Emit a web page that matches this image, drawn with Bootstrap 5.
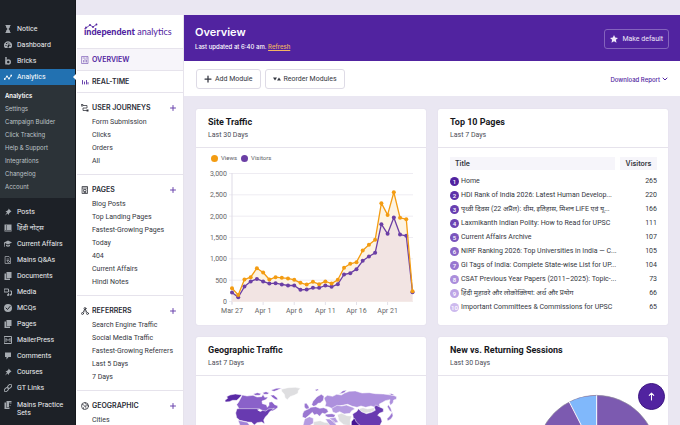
<!DOCTYPE html>
<html lang="en">
<head>
<meta charset="utf-8">
<meta name="viewport" content="width=device-width, initial-scale=1">
<title>Overview – Independent Analytics</title>
<link href="https://cdn.jsdelivr.net/npm/bootstrap@5.3.0/dist/css/bootstrap.min.css" rel="stylesheet">
<style>
:root{--purple:#5123a0;--ink:#333640;--line:#e6e3ec}
body{font-family:Roboto,"Noto Sans",sans-serif;font-size:7px;line-height:13px;color:var(--ink);background:#eae7f2}
a{color:inherit;text-decoration:none}
svg{display:block;flex:none}
.submenu,.top-link,.sec-head,.hero h1,.hero p,.dl,.pages th{font-family:Inter,"Noto Sans",sans-serif}
.ico{width:8px;height:8px;fill:none;stroke:currentColor;stroke-width:1.5;stroke-linecap:round;stroke-linejoin:round}
.ico .f{fill:currentColor;stroke:none}
.shell{height:100vh}
.admin{width:76px;background:#1d2127;color:#eceef0;padding-top:21px;border-right:1px solid #15181c}
.admin .item{display:flex;gap:5px;padding:2px 4px;line-height:12px;position:relative}
.admin .item .ico{width:8px;height:8px;margin-top:2px;color:#a5aab0}
.admin .two{line-height:8px;padding-top:5px}
.admin .two .ico{margin-top:0}
.admin .current{background:#2271b1;color:#fff}
.admin .current .ico{color:#fff}
.admin .current::after{content:"";position:absolute;right:-1px;top:5px;border:3px solid transparent;border-right-color:#fff;border-left:0}
.submenu{background:#2c3338;color:#bfc4c9;font-size:6px;padding:4px 5px 5px;margin-bottom:6px}
.submenu a{display:block}
.submenu .on{color:#fff;font-weight:600}
.reports{width:108px;background:#fff;margin-top:15px;border-right:1px solid var(--line);border-left:1px solid #fff}
.brandmark{height:34px;padding-left:7px;color:var(--purple);border-bottom:1px solid var(--line)}
.brandmark svg{overflow:visible}
.brandmark text{font-family:Lato,sans-serif;font-size:9px;fill:currentColor}
.top-link,.sec-head{display:flex;align-items:center;gap:3px;padding:0 7px 0 4px;font-weight:600;color:#2b2d36}
.top-link{height:22px;border-bottom:1px solid var(--line)}
.top-link.on{background:#f7f5fa;color:var(--purple)}
.top-link .ico{color:#6a45ad}
.sec{border-bottom:1px solid var(--line);padding:6px 0}
.sec-head{height:17px}
.plus{border:0;background:none;padding:0;margin-left:auto;color:#6a45ad}
.plus .ico{width:6px;height:6px}
.sec ul{padding-left:15px;margin:0}
.main{margin-top:15px}
.hero{background:var(--purple);color:#fff;padding:9px 11px 8px}
.hero h1{font-size:11px;line-height:16px;font-weight:600;margin:0}
.hero p{font-size:6px;line-height:13px;margin:0;font-weight:500}
.hero p a{color:#f3b562;text-decoration:underline}
.star{border:1px solid #8463bd;color:#eee8f8;border-radius:3px;font-size:7px;line-height:18px;padding:0 5px;background:none}
.tools{background:#fff;padding:8px 12px 7px}
.tool{font-size:7px;line-height:18px;padding:0 7px;gap:3px;border:1px solid #dedbe6;border-radius:3px;background:#fff;color:var(--ink)}
.dl{border:0;background:none;padding:0;gap:2px;color:var(--purple);font-size:6px;font-weight:500}
.dl .ico{width:6px;height:6px}
.board{display:grid;grid-template-columns:1fr 1fr;gap:12px;padding:13px 12px}
.panel{background:#fff;border:0;border-radius:2px;box-shadow:0 0 1px #cfc9dc}
.panel-head{padding:6px 12px 6px;border-bottom:1px solid var(--line)}
.panel-head h2{font-size:9px;line-height:14px;font-weight:700;color:#17181d;margin:0}
.panel-head p{font-size:7px;line-height:12px;margin:0;color:#4c4e57}
.legend-row{padding:4px 15px 3px;line-height:12px;font-size:6px;color:#5b5d66}
.dot{width:7px;height:7px;border-radius:50%;background:#f39c12;margin-right:3px}
.dot.v{background:#6b3fa5}
.chart text{font-size:7px;fill:#666}
.pages{width:calc(100% - 23px);margin:9px 11px 0 12px;table-layout:fixed;border-collapse:separate;border-spacing:0}
.pages th{background:#f6f5fa;line-height:13px;padding:0 5px;font-weight:600}
.pages th:last-child{width:42px;border-left:5px solid #fff;text-align:center}
.pages td{line-height:14px;padding:0}
.pages td:last-child{text-align:right}
.pages tr:first-child td{padding-top:4px}
.cellwrap{display:flex;align-items:center;gap:2px}
.rank{width:9px;height:9px;border-radius:50%;color:#fff;font-size:6px;line-height:9px;text-align:center;font-weight:500;flex:none}
.r1{background:#5123a0}.r2{background:#5d31a9}.r3{background:#683eb0}.r4{background:#6c44b3}.r5{background:#7a54bd}
.r6{background:#8966c7}.r7{background:#9877d0}.r8{background:#ab8edb}.r9{background:#bda5e6}.r10{background:#cdbaee}
.up{position:fixed;right:15px;bottom:15px;width:27px;height:27px;border-radius:50%;border:1px solid #3d1780;background:var(--purple);color:#fff;padding:0}
.up .ico{width:9px;height:9px}
</style>
</head>
<body>
<div class="shell d-flex overflow-hidden">
<nav class="admin flex-shrink-0" aria-label="Admin menu">
<a href="#" class="item"><svg class="ico" viewBox="0 0 16 16"><path class="f" d="M3 0h10v2h-1c0 3-1 4-3 6 2 2 3 3 3 6h1v2H3v-2h1c0-3 1-4 3-6-2-2-3-3-3-6H3z"/></svg>Notice</a>
<a href="#" class="item"><svg class="ico" viewBox="0 0 16 16"><path class="f" fill-rule="evenodd" d="M2 14A8 8 0 1 1 14 14zM7 3v2h2V3zM3 8v2h2V8zm8 0v2h2V8zM4 4v2h2V4zm7 0-4 6v3h3z"/></svg>Dashboard</a>
<a href="#" class="item"><svg class="ico" viewBox="0 0 16 16"><path stroke-width="3" d="M4 1v13"/><circle cx="8.500" cy="10" r="4" stroke-width="3"/></svg>Bricks</a>
<a href="#" class="item current"><svg class="ico" viewBox="0 0 16 16"><path d="M1 12 6 7l4 4 5-6"/><g class="f"><circle cx="1.500" cy="12" r="1.800"/><circle cx="6" cy="7" r="1.800"/><circle cx="10" cy="11" r="1.800"/><circle cx="14.500" cy="5" r="1.800"/></g></svg>Analytics</a>
<div class="submenu"><a href="#" class="on">Analytics</a><a href="#">Settings</a><a href="#">Campaign Builder</a><a href="#">Click Tracking</a><a href="#">Help &amp; Support</a><a href="#">Integrations</a><a href="#">Changelog</a><a href="#">Account</a></div>
<a href="#" class="item"><svg class="ico" viewBox="0 0 16 16"><path class="f" d="m9 1 6 6-2 1-3 3v3l-3-3-5 4 4-6-3-3h3l3-3z"/></svg>Posts</a>
<a href="#" class="item"><svg class="ico" viewBox="0 0 16 16"><path class="f" fill-rule="evenodd" d="M1 1h14v14H1zM4 2v10h1V2zm-2 11v1h12v-1z"/></svg>हिंदी नोट्स</a>
<a href="#" class="item"><svg class="ico" viewBox="0 0 16 16"><path class="f" d="m0 5 8-4 8 4-8 4-6-3v8H1zm4 4 4 2 4-2v3q-4 3-8 0z"/></svg>Current Affairs</a>
<a href="#" class="item"><svg class="ico" viewBox="0 0 16 16"><path d="M3 1h7l3 3v11H3zM6 6h4M6 9h2"/><circle cx="9" cy="11" r="2"/></svg>Mains Q&amp;As</a>
<a href="#" class="item"><svg class="ico" viewBox="0 0 16 16"><path class="f" d="M5 0h10v12H5zM1 3h3v10h8v3H1z"/></svg>Documents</a>
<a href="#" class="item"><svg class="ico" viewBox="0 0 16 16"><path stroke-width="2" d="M1 2h8v6H1zM12 6h3v7M9 11v3"/><circle class="f" cx="13" cy="13.500" r="2"/><circle class="f" cx="8" cy="14" r="2"/></svg>Media</a>
<a href="#" class="item"><svg class="ico" viewBox="0 0 16 16"><circle class="f" cx="8" cy="8" r="8"/><path stroke="#1d2127" stroke-width="2" d="m4 8 3 3 5-6"/></svg>MCQs</a>
<a href="#" class="item"><svg class="ico" viewBox="0 0 16 16"><path class="f" d="M5 0h10v12H5zM1 3h3v10h8v3H1z"/></svg>Pages</a>
<a href="#" class="item"><svg class="ico" viewBox="0 0 16 16"><path stroke-width="2" d="M1 1h14v14H1zM4 11V5l4 4 4-4v6"/></svg>MailerPress</a>
<a href="#" class="item"><svg class="ico" viewBox="0 0 16 16"><path class="f" d="M2 1h12v9H9l-4 5v-5H2z"/></svg>Comments</a>
<a href="#" class="item"><svg class="ico" viewBox="0 0 16 16"><path class="f" d="m9 1 6 6-2 1-3 3v3l-3-3-5 4 4-6-3-3h3l3-3z"/></svg>Courses</a>
<a href="#" class="item"><svg class="ico" viewBox="0 0 16 16"><g stroke-width="2"><rect x="7" y="2" width="9" height="6" rx="3" transform="rotate(-45 11 5)"/><rect x="0" y="8" width="9" height="6" rx="3" transform="rotate(-45 5 11)"/></g></svg>GT Links</a>
<a href="#" class="item two"><svg class="ico" viewBox="0 0 16 16"><path class="f" d="M5 0h10v3h-5v9H5zM1 3h3v10h7v3H1zM11 5h4v1h-4zm0 3h3v1h-3z"/></svg><span>Mains Practice Sets</span></a>
</nav>

<aside class="reports flex-shrink-0 overflow-hidden">
<div class="brandmark"><svg width="92" height="33" viewBox="0 0 92 33" role="img" aria-label="independent analytics"><path d="m2 13 4-3 3 2 4-3" fill="none" stroke="currentColor" stroke-width=".8"/><g fill="currentColor"><circle cx="2" cy="12.500" r=".9"/><circle cx="6" cy="10" r=".9"/><circle cx="9" cy="12" r=".9"/><circle cx="12.500" cy="9.500" r=".9"/></g><text x="0" y="20"><tspan font-weight="900">independent</tspan> analytics</text></svg></div>
<a href="#" class="top-link on"><svg class="ico" viewBox="0 0 16 16"><path stroke-width="1.200" d="M2 1h12v14H2zM5 12V9M8 12V6m3 6v-4M4 4h3m3 0h2"/></svg>OVERVIEW</a>
<a href="#" class="top-link"><svg class="ico" viewBox="0 0 16 16"><path stroke-width="2" d="M3 5v7M7 8v4m4-7v7m3-3v3"/></svg>REAL-TIME</a>
<section class="sec"><div class="sec-head"><svg class="ico" viewBox="0 0 16 16"><path d="M5 3h7v5H4v5h7M1 1h3v3H1z"/><path class="f" d="M11 11h4v4h-4z"/></svg>USER JOURNEYS<button class="plus" aria-label="Add user journey"><svg class="ico" viewBox="0 0 12 12"><path stroke-width="2" d="M6 1v10M1 6h10"/></svg></button></div>
<ul class="list-unstyled"><li><a href="#">Form Submission</a></li><li><a href="#">Clicks</a></li><li><a href="#">Orders</a></li><li><a href="#">All</a></li></ul></section>
<section class="sec"><div class="sec-head"><svg class="ico" viewBox="0 0 16 16"><path d="M3 1h10v14H3zM3 4h10M6 7h4v4H6zM6 13h4"/></svg>PAGES<button class="plus" aria-label="Add page report"><svg class="ico" viewBox="0 0 12 12"><path stroke-width="2" d="M6 1v10M1 6h10"/></svg></button></div>
<ul class="list-unstyled"><li><a href="#">Blog Posts</a></li><li><a href="#">Top Landing Pages</a></li><li><a href="#">Fastest-Growing Pages</a></li><li><a href="#">Today</a></li><li><a href="#">404</a></li><li><a href="#">Current Affairs</a></li><li><a href="#">Hindi Notes</a></li></ul></section>
<section class="sec"><div class="sec-head"><svg class="ico" viewBox="0 0 16 16"><circle cx="8" cy="3" r="2"/><circle cx="3" cy="13" r="2"/><circle cx="13" cy="13" r="2"/><path d="M7 5 4 11m5-6 3 6M8 5v5"/></svg>REFERRERS<button class="plus" aria-label="Add referrer report"><svg class="ico" viewBox="0 0 12 12"><path stroke-width="2" d="M6 1v10M1 6h10"/></svg></button></div>
<ul class="list-unstyled"><li><a href="#">Search Engine Traffic</a></li><li><a href="#">Social Media Traffic</a></li><li><a href="#">Fastest-Growing Referrers</a></li><li><a href="#">Last 5 Days</a></li><li><a href="#">7 Days</a></li></ul></section>
<section class="sec"><div class="sec-head"><svg class="ico" viewBox="0 0 16 16"><circle cx="8" cy="8" r="7"/><path stroke-width="1.200" d="m2 5 4 1 1 3-2 2v3M8 1l1 3 4 1M9 8l4-1 2 2M9 8l1 5"/></svg>GEOGRAPHIC<button class="plus" aria-label="Add geographic report"><svg class="ico" viewBox="0 0 12 12"><path stroke-width="2" d="M6 1v10M1 6h10"/></svg></button></div>
<ul class="list-unstyled"><li><a href="#">Cities</a></li></ul></section>
</aside>

<main class="main flex-grow-1">
<header class="hero d-flex justify-content-between align-items-center"><div><h1>Overview</h1><p>Last updated at 6:40 am. <a href="#">Refresh</a></p></div>
<button class="star d-flex align-items-center gap-1"><svg class="ico" viewBox="0 0 16 16"><path class="f" d="m8 0 2.400 5.200 5.600.7-4.200 3.800 1.200 5.800-5-2.900-5 2.900 1.200-5.800L0 5.900l5.600-.7z"/></svg>Make default</button></header>
<div class="tools d-flex align-items-center">
<button class="tool d-flex align-items-center me-1"><svg class="ico" viewBox="0 0 16 16"><path stroke-width="2.500" d="M8 2v12M2 8h12"/></svg>Add Module</button>
<button class="tool d-flex align-items-center"><svg class="ico" viewBox="0 0 16 16"><path class="f" d="M0 5h8l-4 6zm8 6 4-6 4 6z"/></svg>Reorder Modules</button>
<button class="dl d-flex align-items-center ms-auto">Download Report<svg class="ico" viewBox="0 0 12 12"><path stroke-width="2" d="m2 4 4 4 4-4"/></svg></button></div>
<div class="board">
<section class="panel"><div class="panel-head"><h2>Site Traffic</h2><p>Last 30 Days</p></div>
<div class="legend-row d-flex align-items-center"><span class="dot"></span><span class="me-1">Views</span><span class="dot v"></span>Visitors</div>
<svg class="chart w-100" id="traffic" viewBox="0 0 230 158" role="img" aria-label="Views and visitors per day"></svg></section>
<section class="panel"><div class="panel-head"><h2>Top 10 Pages</h2><p>Last 7 Days</p></div>
<table class="pages"><thead><tr><th>Title</th><th>Visitors</th></tr></thead><tbody>
<tr><td><div class="cellwrap"><span class="rank r1">1</span><span>Home</span></div></td><td>265</td></tr>
<tr><td><div class="cellwrap"><span class="rank r2">2</span><span class="text-nowrap">HDI Rank of India 2026: Latest Human Develop...</span></div></td><td>220</td></tr>
<tr><td><div class="cellwrap"><span class="rank r3">3</span><span class="text-nowrap">पृथ्वी दिवस (22 अप्रैल): थीम, इतिहास, मिशन LiFE एवं यू...</span></div></td><td>166</td></tr>
<tr><td><div class="cellwrap"><span class="rank r4">4</span><span class="text-nowrap">Laxmikanth Indian Polity: How to Read for UPSC</span></div></td><td>111</td></tr>
<tr><td><div class="cellwrap"><span class="rank r5">5</span><span class="text-nowrap">Current Affairs Archive</span></div></td><td>107</td></tr>
<tr><td><div class="cellwrap"><span class="rank r6">6</span><span class="text-nowrap">NIRF Ranking 2026: Top Universities in India — C...</span></div></td><td>105</td></tr>
<tr><td><div class="cellwrap"><span class="rank r7">7</span><span class="text-nowrap">GI Tags of India: Complete State-wise List for UP...</span></div></td><td>104</td></tr>
<tr><td><div class="cellwrap"><span class="rank r8">8</span><span class="text-nowrap">CSAT Previous Year Papers (2011–2025): Topic-...</span></div></td><td>73</td></tr>
<tr><td><div class="cellwrap"><span class="rank r9">9</span><span class="text-nowrap">हिंदी मुहावरे और लोकोक्तियां: अर्थ और प्रयोग</span></div></td><td>66</td></tr>
<tr><td><div class="cellwrap"><span class="rank r10">10</span><span class="text-nowrap">Important Committees &amp; Commissions for UPSC</span></div></td><td>65</td></tr>
</tbody></table></section>
<section class="panel"><div class="panel-head"><h2>Geographic Traffic</h2><p>Last 7 Days</p></div>
<svg class="w-100" viewBox="18 153 690 300" role="img" aria-label="World map of visitors"><g stroke="#fff" stroke-width="1.500" stroke-linejoin="round">
<path fill="#5a2aa6" d="m105 226 8-6-3-5 10-5 16-3 20 3-11 12-5 4-12 0-10 4-12 1z"/>
<path fill="#8a61c9" d="m157 210 14 3 18-2 12 5 14-1 4-7 5 9 10-1-6 8-12 4 1 8 12 3 3 8 5-6 0-9 9-2 8 9 9 3 0 6-10 7-6 3-14-1-8 8-14-5-64-1-2-12-5-8 6-8z"/>
<path fill="#8a61c9" d="m190 207 12-4 12 3-6 5-12 0zm28-4 10-3 10 4-6 4-10 0zm26-8 16-5 15-1-12 6-10 4-5-1zm-3 16 10-1 11 9 1 6-8-2-8-6z"/>
<path fill="#683ab0" d="m141 251 66 0 10 5 10 2 9-6 17-2-14 10-5 8-8 8-5 9 3 12-9-6-14 2-8 7-8-8-12-1-24-5-9-8-3-14z"/>
<path fill="#a283d7" d="m144 286 28 6 8 10 16 4 0 60-20-20-20-30z"/>
<path fill="#dedee0" d="m274 193 20-5 22-1 15 3-6 7-1 8-10 5-14 5-8 9-7-6-2-10-8-9z"/>
<path fill="#ad90dd" d="m402 219 10-8 16 3 12-6 14 2 10-6 14-5 18-1 20 6 22-1 18 3 24 1 30 4 10 4-1 8-8 2-2 9-8 7-3-9 2-8-14 3-8 5-10 5 2 10-7 8-4-7-16-5-16 4-14-4-12 4-14-3-14-6-16 3-18 3-12 7-10-5-12-2 3-10z"/>
<path fill="#9a77d1" d="m365 239 4-10 12-14 13-7 8 6-2 12-9 8-7 1-5 6-8 3zm-22-3 6-2 7 10 2 7-10 1-5-6zm-1 22 12-6 9-5 14-2 12 5 12-2 10 4 4 8-10 7-8-3-8 10-8-7-8 3-6-8-9 8-12 10-9-4 1-10zm64 10 20-2 11 4-5 7-18 0-8-4z"/>
<path fill="#b59be1" d="m425 250 16-9 14 2 14-3 19 7 7 5-10 5-5 8-18 2-13-7-11 5-10-4z"/>
<path fill="#dedee0" d="m507 251 12-3 14 4 20-4 0 9-12 5-18 3-12-6z"/>
<path fill="#683ab0" d="m488 267 13-8 4-8 9 9 15 6 16-4 11-6-3-9 4-7 10 5 13 6 0 9-12 5-5 6 9 6 4 12-6 12-20 14-30-6-28-20z"/>
<path fill="#dedee0" d="m441 269 14-4 16 7 14 1-4 12 0 18-20-4-14-12zM371 290l20-3 12 5 16 1 0 70-50 0z"/>
<path fill="#b59be1" d="m344 282 14-7 12 5 0 15-20 12-12-2zm62 0 12 0 14 6 8 14-20 0zm12-2 18-3 9 15-12 2z"/>
<path fill="#451493" d="m484 290 9-11 6 12 11 10 18 4-6 30-30 0-8-25z"/>
<path fill="#9a77d1" d="m591 281 8-8 8-12 2 12-6 9-10 6zm4-42 7 10 4 13-7-5-7-12z"/>
<path fill="#8a61c9" d="m375 194 8-2 3 3-7 3zm73 13 10-9 12-3-8 8zm149-1 8 0 8 3-7 2z"/>
</g><path fill="#fff" d="m223 226 8-3 4 5-5 8-8-3zM434 270l7-3 5 12-4 5zM201 254l8-2 9 5-7 3-5-2z"/></svg></section>
<section class="panel"><div class="panel-head"><h2>New vs. Returning Sessions</h2><p>Last 30 Days</p></div>
<svg class="w-100" viewBox="24 153 690 440" role="img" aria-label="Share of new and returning sessions"><circle cx="500" cy="391" r="180" fill="#7c5ab0" stroke="#8d8a99" stroke-width="2"/><path d="M500 391V212A179 179 0 0 0 419 231z" fill="#80b8fb"/><path d="M500 211v180L418 231" fill="none" stroke="#fff" stroke-width="3"/></svg></section>
</div></main>
</div>
<button class="up d-flex align-items-center justify-content-center" aria-label="Back to top"><svg class="ico" viewBox="0 0 16 16"><path stroke-width="1.800" d="M8 14V2M4 6l4-4 4 4"/></svg></button>
<script>
const views=[310,155,515,570,780,680,515,570,555,540,508,437,398,460,406,470,422,508,790,883,922,1195,1328,1445,2305,2030,2560,1960,1930,240];
const visitors=[210,100,350,470,530,470,420,430,400,375,375,273,281,320,320,375,344,406,633,664,758,953,1055,1140,1812,1586,1968,1570,1540,219];
const px=i=>36+i*180.5/29, py=v=>134.5-v*128/3000;
let out='';
for(let v=0;v<=3000;v+=500)out+=`<path d="M33 ${py(v)}H217" stroke="#eeecf2" stroke-width="1"/><text x="31" y="${py(v)+2.5}" text-anchor="end">${v.toLocaleString('en-US')}</text>`;
out+=`<path d="M36 6V137" stroke="#dedbe6"/>`;
['Mar 27','Apr 1','Apr 6','Apr 11','Apr 16','Apr 21'].forEach((t,k)=>{out+=`<path d="M${px(k*5)} 135v3" stroke="#e4e1ea"/><text x="${px(k*5)}" y="146" text-anchor="middle">${t}</text>`});
const pts=a=>a.map((v,i)=>px(i)+' '+py(v)).join('L');
const area=(a,f)=>`<path d="M${pts(a)}V${py(0)}H${px(0)}Z" fill="${f}"/>`;
const line=(a,c)=>`<path d="M${pts(a)}" fill="none" stroke="${c}" stroke-width="1.3" stroke-linejoin="round"/>`+a.map((v,i)=>`<circle cx="${px(i)}" cy="${py(v)}" r="2" fill="${c}"/>`).join('');
out+=area(views,'#fdf3e1')+area(visitors,'#f2e4e3')+line(visitors,'#6b3fa5')+line(views,'#f39c12');
document.getElementById('traffic').innerHTML=out;
</script>
<script src="https://cdn.jsdelivr.net/npm/bootstrap@5.3.0/dist/js/bootstrap.bundle.min.js"></script>
</body>
</html>
